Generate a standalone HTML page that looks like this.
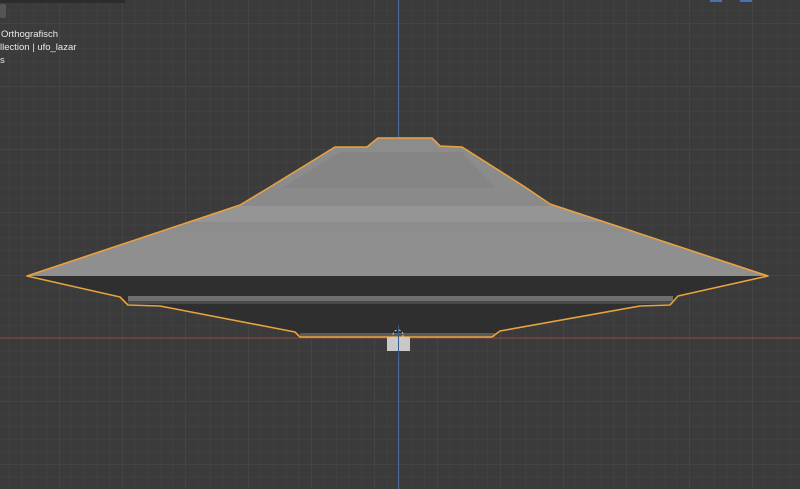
<!DOCTYPE html>
<html><head><style>
html,body{margin:0;padding:0;width:800px;height:489px;overflow:hidden;background:#3b3b3b;font-family:"Liberation Sans",sans-serif}
.t{position:absolute;left:1px;color:#e8e8e8;font-size:9.5px;line-height:13px}
</style></head><body>
<svg width="800" height="489" style="position:absolute;left:0;top:0">
<defs>
<pattern id="g" width="12.6" height="12.6" patternUnits="userSpaceOnUse" x="-4" y="-2">
<path d="M0 0H12.6M0 0V12.6" stroke="#444" stroke-width="1" fill="none"/>
</pattern>
<pattern id="G" width="63" height="63" patternUnits="userSpaceOnUse" x="-4" y="23">
<path d="M0 0H63M0 0V63" stroke="#4b4b4b" stroke-width="1" fill="none"/>
</pattern>
<linearGradient id="top" x1="0" y1="0" x2="0" y2="1">
<stop offset="0" stop-color="#8d8d8d"/><stop offset="0.5" stop-color="#8a8a8a"/><stop offset="1" stop-color="#939393"/>
</linearGradient>
<clipPath id="c"><path d="M27 276 L240 205 L265 190 L335 147 L367 147 L378 138 L432 138 L440 146 L462 147 L525 187 L550 204 L768 276 Z"/></clipPath>
</defs>
<rect width="800" height="489" fill="url(#g)"/>
<rect width="800" height="489" fill="url(#G)"/>
<line x1="0" y1="338" x2="800" y2="338" stroke="#8a4a40" stroke-width="1"/>
<line x1="398.5" y1="0" x2="398.5" y2="489" stroke="#4d6a9a" stroke-width="1"/>
<g clip-path="url(#c)">
<rect x="0" y="130" width="800" height="150" fill="url(#top)"/>
<path d="M282 188 L340 152 L462 152 L495 188 Z" fill="#858585"/>
<rect x="0" y="206" width="800" height="16" fill="#959595"/>
<rect x="0" y="233" width="800" height="45" fill="#8f8f8f"/>
</g>
<path d="M27 276 L768 276 L678 296 L670 305 L640 306 L500 331 L492 337 L300 337 L295 332 L160 306 L128 305 L120 297 Z" fill="#2f2f2f"/>
<rect x="128" y="296" width="545" height="7" fill="#6f6f6f"/>
<rect x="128" y="301" width="545" height="3" fill="#4a4a4a"/>
<rect x="300" y="333" width="195" height="4" fill="#5a5a5a"/>
<path d="M27 276 L240 205 L265 190 L335 147 L367 147 L378 138 L432 138 L440 146 L462 147 L525 187 L550 204 L768 276 L678 296 L670 305 L640 306 L500 331 L492 337 L300 337 L295 332 L160 306 L128 305 L120 297 Z" fill="none" stroke="#e8a240" stroke-width="1.6" stroke-linejoin="round"/>
<rect x="387" y="337" width="23" height="14" fill="#c8c8c8"/>
<circle cx="398" cy="335" r="5" fill="none" stroke="#d0d0d0" stroke-width="1" stroke-dasharray="2 2"/>
<line x1="398.5" y1="325" x2="398.5" y2="355" stroke="#3a5a8a" stroke-width="1"/>
<rect x="0" y="0" width="125" height="3" fill="#2c2c2c"/>
<rect x="0" y="4" width="6" height="14" rx="2" fill="#555"/>
<rect x="710" y="0" width="12" height="2" fill="#4a72b0"/>
<rect x="740" y="0" width="12" height="2" fill="#4a72b0"/>
</svg>
<div class="t" style="top:28px">Orthografisch</div>
<div class="t" style="top:41px;left:0">llection | ufo_lazar</div>
<div class="t" style="top:54px;left:0">s</div>
</body></html>
